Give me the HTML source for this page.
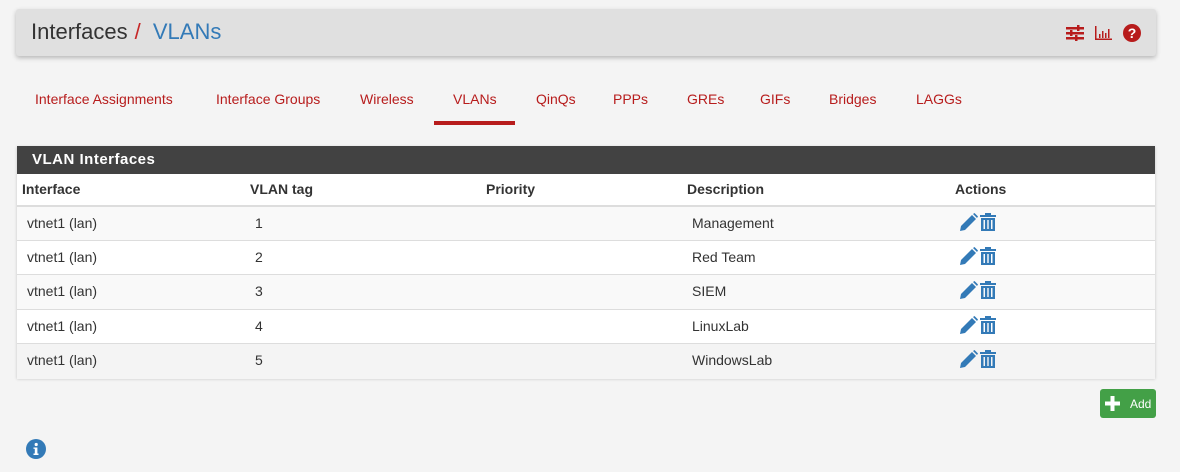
<!DOCTYPE html>
<html><head><style>
body{margin:0;background:#f4f4f4;font-family:"Liberation Sans",sans-serif;width:1180px;height:472px;position:relative;overflow:hidden}
.hdr{position:absolute;left:16px;top:9px;width:1140px;height:47px;background:#e0e0e0;border-radius:3px;box-shadow:0 2px 5px rgba(0,0,0,.25)}
.hdr .t{position:absolute;left:15px;top:10px;font-size:22px;color:#333}
.hdr .t .s{color:#c62828;margin:0 6px 0 7px}
.hdr .t .b{color:#337ab7}
.tabs a{position:absolute;top:91px;font-size:14px;color:#b71c1c;text-decoration:none}
.ul{position:absolute;left:434px;top:121px;width:81px;height:4px;background:#b71c1c}
.panel{position:absolute;left:17px;top:146px;width:1138px;height:232px;background:#fff;box-shadow:0 1px 3px rgba(0,0,0,.2)}
.ph{height:28px;background:#424242;color:#fff;font-weight:bold;font-size:15px;line-height:28px;padding-left:15px;letter-spacing:.5px}
.row{position:absolute;left:0;width:1138px;font-size:14px;color:#333;border-top:1px solid #ddd}
.row span{position:absolute}
.icons{position:absolute;left:942px}
.add{position:absolute;left:1100px;top:389px;width:56px;height:29px;background:#43a047;border-radius:3px;color:#fff;font-size:12px}
</style></head><body>
<div class="hdr"><div class="t">Interfaces<span class="s">/</span> <span class="b">VLANs</span></div>
<svg style="position:absolute;left:1050px;top:14px" width="80" height="20" viewBox="0 0 80 20">
<g fill="#b71c1c"><rect x="0" y="4" width="18" height="2.5"/><rect x="0" y="9" width="18" height="2.5"/><rect x="0" y="14" width="18" height="2.5"/><rect x="11" y="2" width="2.5" height="6"/><rect x="4" y="7" width="2.5" height="6"/><rect x="9" y="12" width="2.5" height="6"/>
<rect x="29" y="3" width="1.5" height="14"/><rect x="29" y="15.5" width="17" height="1.5"/><rect x="33" y="11" width="1.5" height="4"/><rect x="36" y="8" width="1.5" height="7"/><rect x="39" y="10" width="1.5" height="5"/><rect x="42" y="6" width="1.5" height="9"/>
<circle cx="66" cy="10" r="9"/></g><text x="66" y="15" fill="#fff" font-size="14" font-weight="bold" text-anchor="middle" font-family="Liberation Sans">?</text></svg></div>
<div class="tabs">
<a style="left:35px">Interface Assignments</a><a style="left:216px">Interface Groups</a><a style="left:360px">Wireless</a><a style="left:453px">VLANs</a><a style="left:536px">QinQs</a><a style="left:613px">PPPs</a><a style="left:687px">GREs</a><a style="left:760px">GIFs</a><a style="left:829px">Bridges</a><a style="left:916px">LAGGs</a></div>
<div class="ul"></div>
<div class="panel"><div class="ph">VLAN Interfaces</div>
<div class="row" style="top:28px;height:31px;border-top:none;border-bottom:2px solid #ddd;font-weight:bold"><span style="left:5px;top:7px">Interface</span><span style="left:233px;top:7px">VLAN tag</span><span style="left:469px;top:7px">Priority</span><span style="left:670px;top:7px">Description</span><span style="left:938px;top:7px">Actions</span></div>
<div class="row" style="top:60px;height:34px;background:#f9f9f9"><span style="left:10px;top:8px">vtnet1 (lan)</span><span style="left:238px;top:8px">1</span><span style="left:675px;top:8px">Management</span><svg class="icons" style="top:6px" width="40" height="20"><use href="#ic"/></svg></div>
<div class="row" style="top:94px;height:34px"><span style="left:10px;top:8px">vtnet1 (lan)</span><span style="left:238px;top:8px">2</span><span style="left:675px;top:8px">Red Team</span><svg class="icons" style="top:6px" width="40" height="20"><use href="#ic"/></svg></div>
<div class="row" style="top:128px;height:34px;background:#f9f9f9"><span style="left:10px;top:8px">vtnet1 (lan)</span><span style="left:238px;top:8px">3</span><span style="left:675px;top:8px">SIEM</span><svg class="icons" style="top:6px" width="40" height="20"><use href="#ic"/></svg></div>
<div class="row" style="top:163px;height:34px"><span style="left:10px;top:8px">vtnet1 (lan)</span><span style="left:238px;top:8px">4</span><span style="left:675px;top:8px">LinuxLab</span><svg class="icons" style="top:6px" width="40" height="20"><use href="#ic"/></svg></div>
<div class="row" style="top:197px;height:35px;background:#f4f4f4"><span style="left:10px;top:8px">vtnet1 (lan)</span><span style="left:238px;top:8px">5</span><span style="left:675px;top:8px">WindowsLab</span><svg class="icons" style="top:6px" width="40" height="20"><use href="#ic"/></svg></div>
</div>
<svg width="0" height="0" style="position:absolute"><defs><g id="ic" fill="#337ab7">
<path d="M1 18 L2 13 L13 2 L17 6 L6 17 Z"/><path d="M14 1 L15.5 0 L19 3.5 L18 5Z"/>
<rect x="21" y="2" width="16" height="2"/><rect x="26" y="0" width="6" height="2"/><path d="M22 5 H36 V18 H22 Z M24.5 7 V16 H26 V7Z M28.3 7 V16 H29.7 V7Z M32 7 V16 H33.5 V7Z" fill-rule="evenodd"/></g></defs></svg>
<div class="add"><svg style="position:absolute;left:4px;top:6px" width="17" height="17"><rect x="6.5" y="1" width="4" height="15" fill="#fff"/><rect x="1" y="6.5" width="15" height="4" fill="#fff"/></svg><span style="position:absolute;left:30px;top:8px">Add</span></div>
<svg style="position:absolute;left:26px;top:439px" width="20" height="20"><circle cx="10" cy="10" r="10" fill="#337ab7"/><rect x="8.8" y="8.5" width="2.6" height="7" fill="#fff"/><rect x="7.5" y="14.5" width="5" height="1.5" fill="#fff"/><rect x="7.5" y="8.5" width="3" height="1.3" fill="#fff"/><circle cx="10.2" cy="5.5" r="1.6" fill="#fff"/></svg>
</body></html>
